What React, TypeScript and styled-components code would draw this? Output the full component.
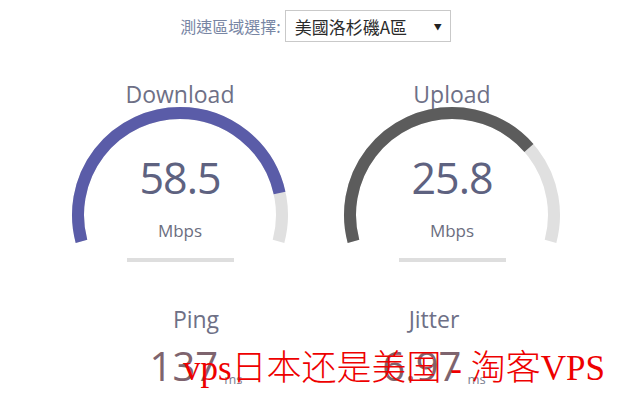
import React from 'react'
import { styled, createGlobalStyle } from 'styled-components'

const GlobalStyle = createGlobalStyle`
  html, body {
    margin: 0;
    padding: 0;
    background: #fff;
  }
  body {
    font-family: "Open Sans", "Noto Sans CJK TC", sans-serif;
  }
`

const Page = styled.div`
  position: relative;
  width: 620px;
  height: 400px;
  overflow: hidden;
  background: #fff;
`

const ServerBar = styled.div`
  display: flex;
  align-items: center;
  justify-content: center;
  gap: 4px;
  padding: 10px 0 0 11px;
  height: 32px;
`

const ServerLabel = styled.span`
  font-family: "Noto Sans CJK TC", sans-serif;
  font-size: 16px;
  color: #7886a4;
  line-height: 32px;
`

const ServerSelect = styled.div`
  box-sizing: border-box;
  width: 166px;
  height: 32px;
  border: 1px solid #c9c9c9;
  display: flex;
  align-items: center;
  justify-content: space-between;
  padding: 0 8px 0 9px;
  font-family: "Noto Sans CJK TC", sans-serif;
  font-size: 17px;
  color: #2a2a2a;
`

const Caret = styled.span`
  font-size: 8px;
  color: #222;
`

const GaugeRow = styled.div`
  display: flex;
  gap: 42px;
  padding-left: 65px;
  margin-top: 38px;
`

const GaugeColumn = styled.div`
  width: 230px;
  display: flex;
  flex-direction: column;
  align-items: center;
`

const GaugeTitle = styled.div`
  font-size: 23px;
  line-height: 28px;
  color: #6e7086;
  margin-bottom: -8px;
  position: relative;
  z-index: 1;
`

const GaugeBox = styled.div`
  display: grid;
  width: 230px;
  height: 150px;
  & > * {
    grid-area: 1 / 1;
  }
`

const GaugeText = styled.div`
  display: flex;
  flex-direction: column;
  align-items: center;
  padding-top: 56px;
`

const GaugeValue = styled.div`
  font-size: 43px;
  line-height: 43px;
  letter-spacing: -1px;
  color: #5e6280;
`

const GaugeUnit = styled.div`
  margin-top: 23px;
  font-size: 17px;
  line-height: 17px;
  color: #6b6e80;
`

const ProgressBar = styled.div`
  width: 107px;
  height: 4px;
  margin-top: 8px;
  background: #dedede;
`

const MeterRow = styled.div`
  display: flex;
  padding-left: 77px;
  margin-top: 46px;
`

const Meter = styled.div`
  width: 238px;
  display: flex;
  flex-direction: column;
  align-items: center;
`

const MeterTitle = styled.div`
  font-size: 23px;
  line-height: 23px;
  color: #6e7086;
`

const MeterValue = styled.div`
  margin-top: 15px;
  font-size: 40px;
  line-height: 40px;
  color: #7e646e;
  white-space: nowrap;
`

const MeterUnit = styled.span`
  font-size: 13px;
  color: #7a7e90;
  margin-left: 6px;
  vertical-align: -3px;
`

const Watermark = styled.div`
  position: absolute;
  left: 183px;
  top: 351px;
  font-family: "Liberation Serif", "Noto Sans CJK SC", serif;
  font-size: 35px;
  font-weight: 300;
  line-height: 35px;
  color: #ee0000;
  white-space: nowrap;
`

// arc: 210 degrees, from 15deg below the left horizontal to 15deg below the right
const R = 102
const CX = 115
const CY = 115
const pt = (deg: number) => {
  const a = (deg * Math.PI) / 180
  return `${(CX + R * Math.cos(a)).toFixed(2)} ${(CY - R * Math.sin(a)).toFixed(2)}`
}
const ARC = `M ${pt(195)} A ${R} ${R} 0 1 1 ${pt(-15)}`

type GaugeProps = {
  title: string
  value: string
  fraction: number
  color: string
}

function Gauge({ title, value, fraction, color }: GaugeProps) {
  return (
    <GaugeColumn>
      <GaugeTitle>{title}</GaugeTitle>
      <GaugeBox>
        <svg width="230" height="150" viewBox="0 0 230 150">
          <path d={ARC} fill="none" stroke="#e0e0e0" strokeWidth="12" />
          <path
            d={ARC}
            fill="none"
            stroke={color}
            strokeWidth="12"
            pathLength={100}
            strokeDasharray={`${fraction * 100} 100`}
          />
        </svg>
        <GaugeText>
          <GaugeValue>{value}</GaugeValue>
          <GaugeUnit>Mbps</GaugeUnit>
        </GaugeText>
      </GaugeBox>
      <ProgressBar />
    </GaugeColumn>
  )
}

export default function App() {
  return (
    <Page>
      <GlobalStyle />
      <ServerBar>
        <ServerLabel>測速區域選擇:</ServerLabel>
        <ServerSelect>
          美國洛杉磯A區
          <Caret>▼</Caret>
        </ServerSelect>
      </ServerBar>

      <GaugeRow>
        <Gauge title="Download" value="58.5" fraction={0.869} color="#5a5ca8" />
        <Gauge title="Upload" value="25.8" fraction={0.733} color="#5c5c5c" />
      </GaugeRow>

      <MeterRow>
        <Meter>
          <MeterTitle>Ping</MeterTitle>
          <MeterValue>
            137<MeterUnit>ms</MeterUnit>
          </MeterValue>
        </Meter>
        <Meter>
          <MeterTitle>Jitter</MeterTitle>
          <MeterValue>
            6.97<MeterUnit>ms</MeterUnit>
          </MeterValue>
        </Meter>
      </MeterRow>

      <Watermark>vps日本还是美国 - 淘客VPS</Watermark>
    </Page>
  )
}
